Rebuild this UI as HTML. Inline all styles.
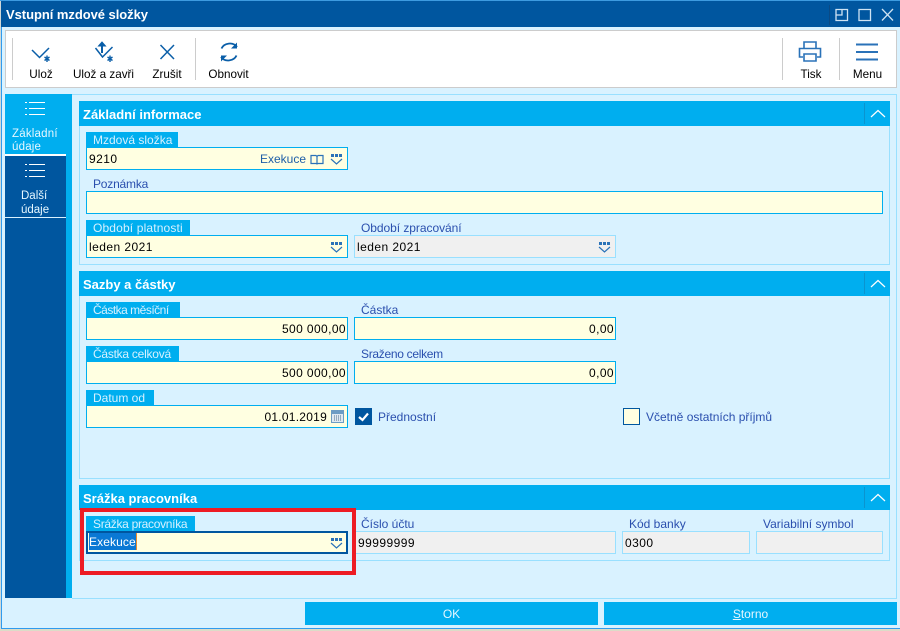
<!DOCTYPE html>
<html><head><meta charset="utf-8">
<style>
html,body{margin:0;padding:0}
body{width:900px;height:631px;position:relative;overflow:hidden;background:#d9f2ff;font-family:"Liberation Sans",sans-serif;font-size:12px;color:#000}
.a{position:absolute;box-sizing:border-box}
.t{position:absolute;white-space:nowrap;line-height:14px}
.hdr{position:absolute;left:79px;width:811px;height:25px;background:#00aeef;color:#fff;font-weight:bold;font-size:13px;line-height:27px;padding-left:4px;box-sizing:border-box}
.hdr i{position:absolute;right:25px;top:2px;width:1px;height:21px;background:#0a94cf}
.hdr svg{position:absolute;right:4px;top:8px}
.pan{position:absolute;left:79px;width:811px;border:1px solid #99e0ff;box-sizing:border-box}
.lb{position:absolute;height:15px;background:#00aeef;color:#d6f1ff;line-height:17px;padding-left:7px;box-sizing:border-box;white-space:nowrap;overflow:hidden}
.ll{position:absolute;color:#2a4fae;line-height:17px;white-space:nowrap}
.in{position:absolute;height:23px;background:#ffffe1;border:1px solid #00aeef;box-sizing:border-box;line-height:23px;padding:0 2px;white-space:nowrap}
.dg{letter-spacing:.45px}
.dis{background:#f0f0f0;border-color:#99e0ff}
.r{text-align:right;padding-right:1px;letter-spacing:.4px}
.in svg{position:absolute;right:4px;top:6px}
.tb{position:absolute;top:68px;line-height:14px;white-space:nowrap;transform:translateX(-50%);font-size:11.7px}
.sep{position:absolute;top:38px;width:1px;height:42px;background:#ccc}
.btn{position:absolute;top:602px;height:23px;background:#00aeef;color:#e5f7ff;text-align:center;line-height:24px}
</style></head><body>

<div class="a" style="left:0;top:0;width:900px;height:1px;background:#3d9be0"></div>
<div class="a" style="left:1px;top:1px;width:899px;height:26px;background:#00569f"></div>
<div class="a" style="left:0;top:1px;width:1px;height:630px;background:#cfd8d8"></div>
<div class="a" style="left:1px;top:27px;width:1px;height:602px;background:#2f9bee"></div>
<div class="t" style="left:6px;top:8px;color:#fff;font-weight:bold;font-size:13px;letter-spacing:-.05px">Vstupní mzdové složky</div>
<div class="a" style="left:829px;top:5px;width:1px;height:20px;background:#0a4a85"></div>
<svg class="a" style="left:835px;top:8px" width="60" height="14" fill="none" stroke="#cfe3f3" stroke-width="1.3">
<path d="M1 1.500H12.500V12.500H1ZM7 1.500V7H1"/><path d="M24 1.500H35.500V12.500H24Z"/><path d="M47 1L58 12.500M58 1L47 12.500"/></svg>

<!-- toolbar -->
<div class="a" style="left:5px;top:30px;width:892px;height:58px;background:#fff;border:1px solid #ccc"></div>
<div class="sep" style="left:12px"></div>
<div class="sep" style="left:195px"></div>
<div class="sep" style="left:782px"></div>
<div class="sep" style="left:839px"></div>
<svg class="a" style="left:25px;top:38px" width="220" height="26" fill="none" stroke="#0a5ea8" stroke-width="1.5">
<path d="M7 12L14.500 19.500L24 10"/>
<path d="M19.500 19L24.500 22.500M24.500 19L19.500 22.500M22 17.500V24" stroke-width="1.4"/>
<path d="M70.500 10L77.500 19L87.500 9"/>
<path d="M77 15V7" stroke-width="2"/><path d="M73.500 8L77 4L80.500 8Z" fill="#0a5ea8" stroke-width="1"/>
<path d="M82.500 19L87.500 22.500M87.500 19L82.500 22.500M85 17.500V24" stroke-width="1.4"/>
<path d="M135.500 7L149 21M149 7L135.500 21"/>
<path d="M196.500 10.500C199 5 208 3.500 212 9" stroke-width="1.8"/><path d="M212 4.500V10.500H206" stroke-width="0" fill="#0a5ea8"/>
<path d="M211.500 17.500C209 23 200 24.500 196 19" stroke-width="1.8"/><path d="M196 23.500V17.500H202" stroke-width="0" fill="#0a5ea8"/></svg>
<svg class="a" style="left:798px;top:40px" width="80" height="24" fill="none" stroke="#2a72b8" stroke-width="1.6">
<path d="M6 8V2H18V8M5 17H1.500V8.500H22.500V17H19"/><path d="M6 14H18V21H6Z"/>
<path d="M58 4.500H81M58 12H81M58 19.500H81" stroke-width="2"/></svg>
<div class="tb" style="left:41px">Ulož</div>
<div class="tb" style="left:103.500px">Ulož a zavři</div>
<div class="tb" style="left:167px">Zrušit</div>
<div class="tb" style="left:228.500px">Obnovit</div>
<div class="tb" style="left:811px">Tisk</div>
<div class="tb" style="left:867.500px">Menu</div>

<!-- side -->
<div class="a" style="left:5px;top:94px;width:61px;height:504px;background:#00569f"></div>
<div class="a" style="left:66px;top:94px;width:6px;height:504px;background:#00aeef"></div>
<div class="a" style="left:5px;top:94px;width:61px;height:61px;background:#00aeef;border-bottom:1px solid #fff"></div>
<div class="a" style="left:5px;top:217px;width:61px;height:1px;background:#d9f2ff"></div>
<div class="a" style="left:5px;top:155px;width:61px;height:1px;background:#fff"></div>
<svg class="a" style="left:24px;top:101px" width="24" height="16" stroke="#fff" fill="none"><path d="M5 1.500H21M5 7.500H21M5 13.500H21M1 1.500H3M1 7.500H3M1 13.500H3" stroke-width="1"/></svg>
<svg class="a" style="left:24px;top:163px" width="24" height="16" stroke="#fff" fill="none"><path d="M5 1.500H21M5 7.500H21M5 13.500H21M1 1.500H3M1 7.500H3M1 13.500H3" stroke-width="1"/></svg>
<div class="t" style="left:12px;top:127px;color:#e5f7ff;font-size:11.5px;letter-spacing:.2px">Základní</div>
<div class="t" style="left:12px;top:140px;color:#e5f7ff;font-size:11.5px;letter-spacing:.2px">údaje</div>
<div class="t" style="left:21px;top:189px;color:#e5f7ff;font-size:11.5px">Další</div>
<div class="t" style="left:21px;top:203px;color:#e5f7ff;font-size:11.5px">údaje</div>

<!-- content frame -->
<div class="a" style="left:72px;top:94px;width:825px;height:505px;border:1px solid #99e0ff;border-left:0"></div>

<!-- panel 1 -->
<div class="pan" style="top:101px;height:164px"></div>
<div class="hdr" style="top:101px">Základní informace<i></i><svg width="16" height="9" fill="none" stroke="#fff" stroke-width="1.2"><path d="M1 8L8 1.500L15 8"/></svg></div>
<div class="lb" style="left:86px;top:132px;width:92px;">Mzdová složka</div>
<div class="in dg" style="left:86px;top:147px;width:262px">9210
  <span style="position:absolute;left:173px;top:0;color:#1f5fa8;letter-spacing:0">Exekuce</span>
  <svg style="right:23px;top:6px" width="14" height="11" fill="none" stroke="#2a72b8" stroke-width="1.2"><path d="M1 1.500H6L7 2.500L8 1.500H13V9.500H8L7 10L6 9.500H1ZM7 2.500V10"/></svg>
  <svg width="13" height="11"><g fill="#2a72b8"><rect x="1" y="0" width="3" height="3"/><rect x="5" y="0" width="3" height="3"/><rect x="9" y="0" width="3" height="3"/></g><path d="M1 5L6.500 10L12 5" fill="none" stroke="#2a72b8" stroke-width="1.2"/></svg>
</div>
<div class="ll" style="left:93px;top:176px;letter-spacing:-.2px">Poznámka</div>
<div class="in" style="left:86px;top:191px;width:797px"></div>
<div class="lb" style="left:86px;top:220px;width:104px;letter-spacing:.15px">Období platnosti</div>
<div class="in dg" style="left:86px;top:235px;width:262px">leden 2021
  <svg width="13" height="11"><g fill="#2a72b8"><rect x="1" y="0" width="3" height="3"/><rect x="5" y="0" width="3" height="3"/><rect x="9" y="0" width="3" height="3"/></g><path d="M1 5L6.500 10L12 5" fill="none" stroke="#2a72b8" stroke-width="1.2"/></svg>
</div>
<div class="ll" style="left:361px;top:220px;letter-spacing:-.05px">Období zpracování</div>
<div class="in dis dg" style="left:354px;top:235px;width:262px">leden 2021
  <svg width="13" height="11"><g fill="#2a72b8"><rect x="1" y="0" width="3" height="3"/><rect x="5" y="0" width="3" height="3"/><rect x="9" y="0" width="3" height="3"/></g><path d="M1 5L6.500 10L12 5" fill="none" stroke="#2a72b8" stroke-width="1.2"/></svg>
</div>

<!-- panel 2 -->
<div class="pan" style="top:271px;height:208px"></div>
<div class="hdr" style="top:271px">Sazby a částky<i></i><svg width="16" height="9" fill="none" stroke="#fff" stroke-width="1.2"><path d="M1 8L8 1.500L15 8"/></svg></div>
<div class="lb" style="left:86px;top:302px;width:94px;letter-spacing:-.5px">Částka měsíční</div>
<div class="in r" style="left:86px;top:317px;width:262px">500 000,00</div>
<div class="ll" style="left:361px;top:302px">Částka</div>
<div class="in r" style="left:354px;top:317px;width:262px">0,00</div>
<div class="lb" style="left:86px;top:346px;width:93px;letter-spacing:-.25px">Částka celková</div>
<div class="in r" style="left:86px;top:361px;width:262px">500 000,00</div>
<div class="ll" style="left:361px;top:346px;letter-spacing:-.3px">Sraženo celkem</div>
<div class="in r" style="left:354px;top:361px;width:262px">0,00</div>
<div class="lb" style="left:86px;top:390px;width:68px">Datum od</div>
<div class="in r" style="left:86px;top:405px;width:262px;padding-right:20px;letter-spacing:.25px">01.01.2019
  <svg style="right:3px;top:4px" width="13" height="13"><rect x=".5" y=".5" width="12" height="12" fill="#dfe9f2" stroke="#6d9cc4"/><rect x="1" y="1" width="11" height="3" fill="#6d9cc4"/><path d="M3 6H10M3 8H10M3 10H10" stroke="#4d6d8a" stroke-dasharray="1 1"/></svg>
</div>
<div class="a" style="left:355px;top:408px;width:17px;height:17px;background:#00569f"></div>
<svg class="a" style="left:355px;top:408px" width="17" height="17" fill="none" stroke="#fff" stroke-width="2.2"><path d="M4 9L7.500 12L13 5.500"/></svg>
<div class="ll" style="left:378px;top:409px">Přednostní</div>
<div class="a" style="left:623px;top:408px;width:17px;height:17px;background:#ffffe1;border:1px solid #00569f"></div>
<div class="ll" style="left:646px;top:409px">Včetně ostatních příjmů</div>

<!-- panel 3 -->
<div class="pan" style="top:485px;height:76px"></div>
<div class="hdr" style="top:485px">Srážka pracovníka<i></i><svg width="16" height="9" fill="none" stroke="#fff" stroke-width="1.2"><path d="M1 8L8 1.500L15 8"/></svg></div>
<div class="lb" style="left:86px;top:516px;width:109px;letter-spacing:-.3px">Srážka pracovníka</div>
<div class="in" style="left:86px;top:531px;width:262px;border:2px solid #00569f;line-height:19px;padding:0 1px">
  <span style="background:#0a78d4;color:#fff;display:inline-block;height:17px;line-height:18px;border-right:1px solid #e88a2c;letter-spacing:.1px">Exekuce</span>
  <svg style="right:3px;top:5px" width="13" height="11"><g fill="#2a72b8"><rect x="1" y="0" width="3" height="3"/><rect x="5" y="0" width="3" height="3"/><rect x="9" y="0" width="3" height="3"/></g><path d="M1 5L6.500 10L12 5" fill="none" stroke="#2a72b8" stroke-width="1.2"/></svg>
</div>
<div class="ll" style="left:361px;top:516px">Číslo účtu</div>
<div class="in dis dg" style="left:354px;top:531px;width:262px;padding-left:3px">99999999</div>
<div class="ll" style="left:629px;top:516px">Kód banky</div>
<div class="in dis dg" style="left:622px;top:531px;width:128px">0300</div>
<div class="ll" style="left:763px;top:516px">Variabilní symbol</div>
<div class="in dis" style="left:756px;top:531px;width:127px"></div>

<div class="a" style="left:80px;top:508px;width:276px;height:67px;border:4px solid #ed1c24"></div>

<!-- buttons -->
<div class="btn" style="left:305px;width:293px">OK</div>
<div class="btn" style="left:604px;width:293px"><u>S</u>torno</div>
<div class="a" style="left:1px;top:628px;width:899px;height:1px;background:#2f9bee"></div>
<div class="a" style="left:0;top:629px;width:900px;height:2px;background:#dcdcc8"></div>
</body></html>
